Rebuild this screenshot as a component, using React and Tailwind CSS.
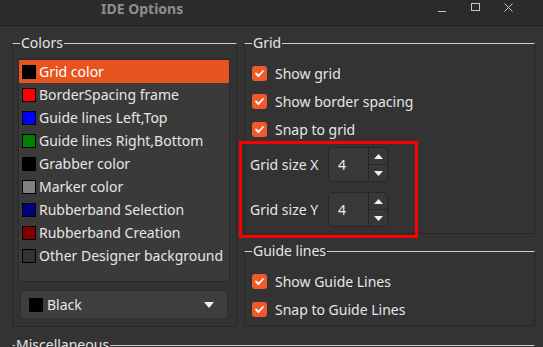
import React from 'react';

const colorItems = [
  { name: 'Grid color', swatch: 'bg-[#000000]', selected: true },
  { name: 'BorderSpacing frame', swatch: 'bg-[#ff0000]' },
  { name: 'Guide lines Left,Top', swatch: 'bg-[#0000ff]' },
  { name: 'Guide lines Right,Bottom', swatch: 'bg-[#008000]' },
  { name: 'Grabber color', swatch: 'bg-[#000000]' },
  { name: 'Marker color', swatch: 'bg-[#808080]' },
  { name: 'Rubberband Selection', swatch: 'bg-[#000080]' },
  { name: 'Rubberband Creation', swatch: 'bg-[#800000]' },
  { name: 'Other Designer background', swatch: 'bg-[#333333]' },
];

const Group = ({ title, className = '', children }) => (
  <fieldset
    className={`border border-[#262626] border-t-[#cfcfcf] ${className}`}
  >
    <legend className="ml-[2px] px-[1px] text-[14px] leading-[18px] text-[#e6e6e6]">
      {title}
    </legend>
    {children}
  </fieldset>
);

const Check = ({ label }) => (
  <div className="flex h-[28px] items-center pl-[2px]">
    <div className="flex h-[15px] w-[15px] items-center justify-center rounded-[3px] bg-[#f05a2a]">
      <svg width="11" height="11" viewBox="0 0 11 11">
        <path d="M2 5.5 L4.5 8 L9 3" fill="none" stroke="#ffffff" strokeWidth="1.8" strokeLinecap="round" strokeLinejoin="round" />
      </svg>
    </div>
    <span className="ml-[8px] text-[14px] text-[#e6e6e6]">{label}</span>
  </div>
);

const Tri = ({ up }) => (
  <svg width="9" height="5" viewBox="0 0 9 5">
    <path d={up ? 'M0 5 L4.5 0 L9 5 Z' : 'M0 0 L4.5 5 L9 0 Z'} fill="#f0f0f0" />
  </svg>
);

const Spin = ({ label, value }) => (
  <div className="flex items-center">
    <span className="w-[78px] text-[14px] text-[#e6e6e6]">{label}</span>
    <div className="flex h-[35px] w-[60px] rounded-[4px] border border-[#272727] bg-[#383838]">
      <div className="flex flex-1 items-center pl-[9px] text-[14px] text-[#ececec]">{value}</div>
      <div className="flex w-[19px] flex-col border-l border-[#272727]">
        <div className="flex flex-1 items-center justify-center border-b border-[#272727]">
          <Tri up />
        </div>
        <div className="flex flex-1 items-center justify-center">
          <Tri />
        </div>
      </div>
    </div>
  </div>
);

export default function App() {
  return (
    <div
      className="relative h-[347px] w-[543px] overflow-hidden bg-[#333333]"
      style={{ fontFamily: '"Noto Sans", "Open Sans", sans-serif' }}
    >
      {/* title bar */}
      <div className="flex h-[26px] items-start border-b border-[#1f1f1f] bg-[#2b2b2b]">
        <span className="pl-[101px] pt-[1px] text-[14px] font-bold leading-[16px] text-[#8e8e8e]">IDE Options</span>
        <div className="ml-auto flex items-start pt-[3px]">
          <svg width="10" height="9" viewBox="0 0 10 9" className="mr-[24px]">
            <path d="M1 8.5 H9" stroke="#c8c8c8" strokeWidth="1" />
          </svg>
          <svg width="9" height="9" viewBox="0 0 9 9" className="mr-[24px]">
            <rect x="0.5" y="0.5" width="8" height="7" fill="none" stroke="#c8c8c8" strokeWidth="1" />
          </svg>
          <svg width="9" height="9" viewBox="0 0 9 9" className="mr-[30px]">
            <path d="M0.5 0.5 L8.5 8.5 M8.5 0.5 L0.5 8.5" stroke="#c8c8c8" strokeWidth="1" />
          </svg>
        </div>
      </div>

      <div className="pl-[12px] pr-[8px] pt-[8px]">
        <div className="flex gap-[7px]">
          {/* Colors */}
          <Group title="Colors" className="w-[225px] pb-[7px] pl-[5px] pr-[6px] pt-[7px]">
            <div className="h-[223px] border border-[#2a2a2a] bg-[#3a3a3a]">
              {colorItems.map((item) => (
                <div
                  key={item.name}
                  className={`flex h-[23px] items-center pl-[3px] text-[14px] ${
                    item.selected ? 'bg-[#e8541f] text-[#ffffff]' : 'text-[#e6e6e6]'
                  }`}
                >
                  <span className={`h-[14px] w-[14px] border border-[#000000] ${item.swatch}`} />
                  <span className="ml-[3px] whitespace-nowrap">{item.name}</span>
                </div>
              ))}
            </div>
            <div className="mx-[2px] mt-[8px] flex h-[29px] items-center rounded-[3px] border border-[#2e2e2e] bg-[#3e3e3e] pl-[8px] pr-[13px]">
              <span className="h-[14px] w-[14px] bg-[#000000]" />
              <span className="ml-[4px] text-[14px] text-[#e6e6e6]">Black</span>
              <svg width="10" height="6" viewBox="0 0 10 6" className="ml-auto">
                <path d="M0 0 L5 6 L10 0 Z" fill="#f0f0f0" />
              </svg>
            </div>
          </Group>

          {/* right column */}
          <div className="flex w-[291px] flex-col gap-[8px]">
            <Group title="Grid" className="pb-[6px] pl-[5px] pt-[7px]">
              <Check label="Show grid" />
              <Check label="Show border spacing" />
              <Check label="Snap to grid" />
              <div className="mt-[4px] flex flex-col gap-[10px]">
                <Spin label="Grid size X" value="4" />
                <Spin label="Grid size Y" value="4" />
              </div>
            </Group>
            <Group title="Guide lines" className="pb-[2px] pl-[5px] pt-[7px]">
              <Check label="Show Guide Lines" />
              <Check label="Snap to Guide Lines" />
            </Group>
          </div>
        </div>

        <Group title="Miscellaneous" className="mt-[9px] h-[60px] w-[523px]" />
      </div>

      {/* highlight */}
      <div className="absolute left-[239px] top-[141px] h-[97px] w-[179px] border-[3px] border-[#ff0000]" />
    </div>
  );
}
